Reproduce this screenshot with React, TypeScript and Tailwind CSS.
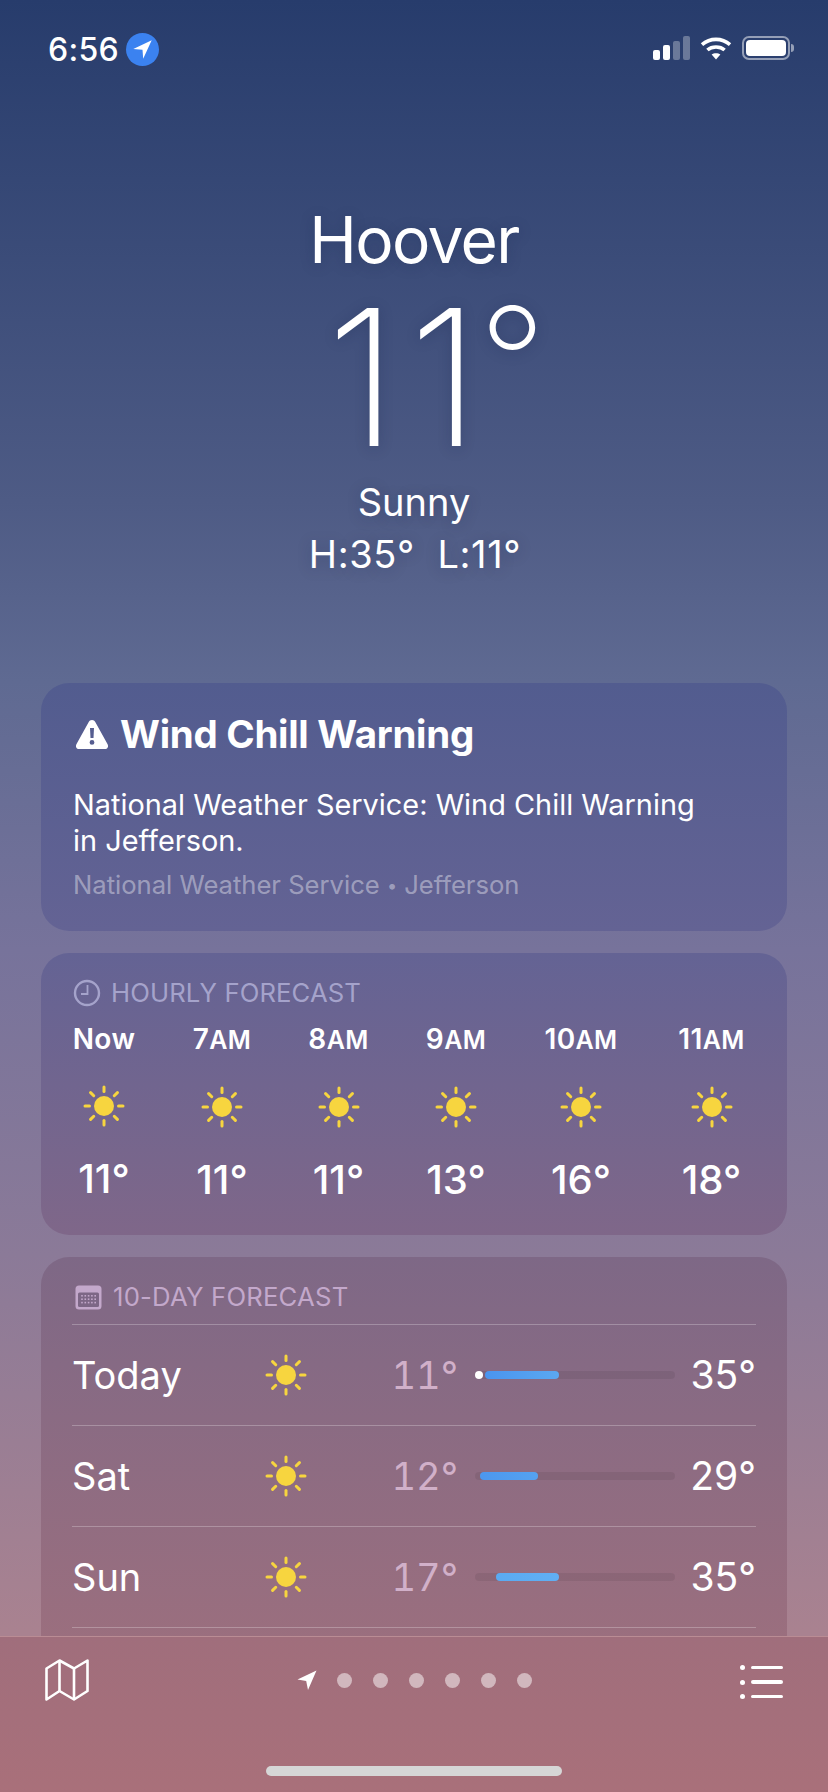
import React from "react";

function Sun({ className = "" }: { className?: string }) {
  const rays = [0, 45, 90, 135, 180, 225, 270, 315];
  return (
    <svg viewBox="0 0 42 42" className={`w-[42px] h-[42px] ${className}`}>
      <circle cx="21" cy="21" r="10" fill="#f7d53f" />
      {rays.map((a) => (
        <line key={a} x1="21" y1="2" x2="21" y2="6.5" stroke="#f7d53f" strokeWidth="3" strokeLinecap="round" transform={`rotate(${a} 21 21)`} />
      ))}
    </svg>
  );
}

const hours = [
  ["Now", "", "11°"],
  ["7", "AM", "11°"],
  ["8", "AM", "11°"],
  ["9", "AM", "13°"],
  ["10", "AM", "16°"],
  ["11", "AM", "18°"],
];

const days = [
  { d: "Today", lo: "11°", hi: "35°", l: 10, w: 74, dot: true, fill: "bg-gradient-to-r from-[#4a94ef] to-[#5ba8f1]" },
  { d: "Sat", lo: "12°", hi: "29°", l: 5, w: 58, dot: false, fill: "bg-gradient-to-r from-[#4c97ef] to-[#55a2f0]" },
  { d: "Sun", lo: "17°", hi: "35°", l: 21, w: 63, dot: false, fill: "bg-gradient-to-r from-[#5aaaf2] to-[#61aff3]" },
];

export default function App() {
  return (
    <div className="relative w-[828px] h-[1792px] overflow-hidden flex flex-col text-white font-[Inter,sans-serif] bg-[linear-gradient(180deg,#273c6c_0%,#4e5b85_28%,#5f6a92_38%,#77739b_53%,#8b7a98_70%,#a98290_91%)]">
      <div className="flex-1 min-h-0 overflow-hidden">
        {/* status bar */}
        <div className="h-[100px] flex items-start justify-between pl-[48px] pr-[34px] pt-[33px]">
          <div className="flex items-center gap-[7px]">
            <span className="text-[32px] leading-[33px] font-medium tracking-[0.3px]">6:56</span>
            <div className="w-[33px] h-[33px] rounded-full bg-[#3b82f0] flex items-center justify-center">
              <svg viewBox="0 0 20 20" className="w-[23px] h-[23px]"><path d="M18 2 L2 9.6 L10 10.2 L10.6 18 Z" fill="#fff" /></svg>
            </div>
          </div>
          <div className="flex items-center gap-[10px] pt-[3px]">
            <div className="flex items-end gap-[3px] h-[24px]">
              <div className="w-[7px] h-[10px] rounded-[2px] bg-white" />
              <div className="w-[7px] h-[15px] rounded-[2px] bg-white" />
              <div className="w-[7px] h-[19px] rounded-[2px] bg-white/30" />
              <div className="w-[7px] h-[24px] rounded-[2px] bg-white/30" />
            </div>
            <svg viewBox="0 0 32 24" className="w-[32px] h-[24px]" fill="none" stroke="#fff" strokeWidth="3.6">
              <path d="M2 8.6 C10 1.6 22 1.6 30 8.6" />
              <path d="M7.4 14 C12 10 20 10 24.6 14" />
              <path d="M16 23.5 L11.6 18.6 C14 16.8 18 16.8 20.4 18.6 Z" fill="#fff" stroke="none" />
            </svg>
            <div className="flex items-center">
              <div className="w-[48px] h-[24px] rounded-[7px] border-2 border-white/50 p-[2px]">
                <div className="w-full h-full rounded-[4px] bg-white" />
              </div>
              <div className="w-[3px] h-[8px] rounded-r-full bg-white/50 ml-[1px]" />
            </div>
          </div>
        </div>

        {/* hero */}
        <div className="flex flex-col items-center [text-shadow:0_2px_14px_rgba(20,30,70,0.25)]">
          <div className="mt-[99px] text-[64px] leading-[82px] tracking-[-1.6px]">Hoover</div>
          <div className="h-[180px] flex items-start pl-[44px] font-extralight">
            <span className="mt-[3px] text-[190px] leading-[186px] tracking-[10px]">11</span>
            <span className="ml-[-12px] mt-[6px] text-[148px] leading-[148px]">°</span>
          </div>
          <div className="mt-[18px] text-[38px] leading-[46px]">Sunny</div>
          <div className="mt-[6px] pl-[2px] text-[38px] leading-[46px] tracking-[0.6px] whitespace-pre">H:35°  L:11°</div>
        </div>

        <div className="mt-[106px] mx-[41px] flex flex-col gap-[22px]">
          {/* warning */}
          <div className="h-[248px] rounded-[28px] bg-gradient-to-b from-[#525c8f] to-[#646394] px-[32px] pt-[28px]">
            <div className="flex items-center gap-[11px]">
              <svg viewBox="0 0 34 31" className="w-[34px] h-[31px] ml-[2px]">
                <path fillRule="evenodd" fill="#fff" d="M17 1 C18.6 1 19.6 1.8 20.4 3.2 L32.6 25.2 C33.8 27.6 32.6 30 29.8 30 L4.2 30 C1.4 30 0.2 27.6 1.4 25.2 L13.6 3.2 C14.4 1.8 15.4 1 17 1 Z M15 9 L15.5 19 L18.5 19 L19 9 Z M17 21 A2.4 2.4 0 1 0 17 25.8 A2.4 2.4 0 1 0 17 21 Z" />
              </svg>
              <span className="text-[38.5px] leading-[46px] font-bold tracking-[-0.3px]">Wind Chill Warning</span>
            </div>
            <div className="mt-[30px] text-[28.9px] leading-[36px] w-[630px]">National Weather Service: Wind Chill Warning in Jefferson.</div>
            <div className="mt-[9px] text-[25.6px] leading-[34px] text-white/40">National Weather Service <span className="text-[18px] align-[2px]">•</span> Jefferson</div>
          </div>

          {/* hourly */}
          <div className="h-[282px] rounded-[28px] bg-gradient-to-b from-[#646394] to-[#7f6789] px-[32px] pt-[25px]">
            <div className="flex items-center gap-[10px] text-[#a5a3cb]">
              <svg viewBox="0 0 28 28" className="w-[28px] h-[28px]" fill="none" stroke="#a5a3cb" strokeWidth="2.4">
                <circle cx="14" cy="14" r="12" />
                <path d="M14.5 6 V15 H8" strokeWidth="1.8" />
              </svg>
              <span className="text-[25.7px] leading-[30px] tracking-[0.1px]">HOURLY FORECAST</span>
            </div>
            <div className="mt-[13px] grid grid-cols-[62px_57px_59px_59px_74px_70px] gap-x-[58.5px]">
              {hours.map(([a, b, t], i) => (
                <div key={i} className="flex flex-col items-center">
                  <div className="text-[28px] leading-[36px] font-semibold whitespace-nowrap tracking-[0.4px]">
                    {a}
                    {b && <span className="text-[25px]">{b}</span>}
                  </div>
                  <Sun className="mt-[28px]" />
                  <div className="mt-[29px] text-[40px] leading-[46px] font-medium">{t}</div>
                </div>
              ))}
            </div>
          </div>

          {/* 10-day */}
          <div className="rounded-t-[28px] bg-gradient-to-b from-[#7e6886] to-[#9c6f7e] h-[400px] px-[31px] pt-[25px]">
            <div className="flex items-center gap-[11px] pl-[3px] text-[#c3a8cb]">
              <svg viewBox="0 0 27 25" className="w-[27px] h-[25px]">
                <rect x="0.5" y="0.5" width="26" height="24" rx="3.5" fill="#c3a8cb" />
                <rect x="3" y="7.5" width="21" height="14.5" rx="1.5" fill="#7d6786" />
                {[0, 1, 2, 3, 4].map((c) => [0, 1, 2].map((r) => (
                  <rect key={`${c}-${r}`} x={6.2 + c * 3.3} y={10 + r * 3.4} width="1.6" height="1.6" fill="#c3a8cb" />
                )))}
              </svg>
              <span className="text-[25.7px] leading-[30px] tracking-[0.2px]">10-DAY FORECAST</span>
            </div>
            <div className="mt-[12px] border-t border-white/25">
              {days.map((r) => (
                <div key={r.d} className="h-[101px] border-b border-white/25 flex items-center">
                  <div className="w-[193px] text-[38px] leading-[46px]">{r.d}</div>
                  <Sun />
                  <div className="w-[151px] text-right text-[38px] leading-[46px] tabular-nums text-[#d1b0c9]">{r.lo}</div>
                  <div className="relative ml-[17px] w-[200px] h-[8px] rounded-full bg-black/[0.07]">
                    <div className={`absolute top-0 h-full rounded-full ${r.fill}`} style={{ left: r.l, width: r.w }} />
                    {r.dot && <div className="absolute left-0 top-0 w-[8px] h-[8px] rounded-full bg-white" />}
                  </div>
                  <div className="flex-1 text-right text-[39px] leading-[46px]">{r.hi}</div>
                </div>
              ))}
            </div>
          </div>
        </div>
      </div>

      {/* bottom bar */}
      <div className="relative h-[156px] shrink-0 border-t border-white/20 bg-gradient-to-b from-[#a06e7c] to-[#a9707a]">
        <div className="flex items-start justify-between pl-[45px] pr-[45px] pt-[22px]">
          <svg viewBox="0 0 44 42" className="w-[44px] h-[42px]" fill="none" stroke="#fff" strokeWidth="2.6" strokeLinejoin="round">
            <path d="M1.5 9.5 L14.5 1.5 L29 9.5 L42.5 1.5 V32 L29 40.5 L14.5 32 L1.5 40.5 Z" />
            <path d="M14.5 1.5 V32 M29 9.5 V40.5" />
          </svg>
          <div className="flex items-center gap-[21px] pt-[11px]">
            <svg viewBox="0 0 20 20" className="w-[20px] h-[20px] mr-[-1px]"><path d="M19.5 0.5 L0.5 9.5 L9.2 11 L11 20 Z" fill="#fff" /></svg>
            {[0, 1, 2, 3, 4, 5].map((i) => (
              <div key={i} className="w-[15px] h-[15px] rounded-full bg-white/50" />
            ))}
          </div>
          <div className="flex flex-col gap-[9.5px] pt-[6px]">
            {[0, 1, 2].map((i) => (
              <div key={i} className="flex items-center gap-[6px]">
                <div className="w-[5px] h-[5px] rounded-full bg-white" />
                <div className="w-[32px] h-[3.5px] rounded-full bg-white" />
              </div>
            ))}
          </div>
        </div>
        <div className="absolute bottom-[16px] left-[266px] w-[296px] h-[10px] rounded-full bg-[#d6d6d6]" />
      </div>
    </div>
  );
}
